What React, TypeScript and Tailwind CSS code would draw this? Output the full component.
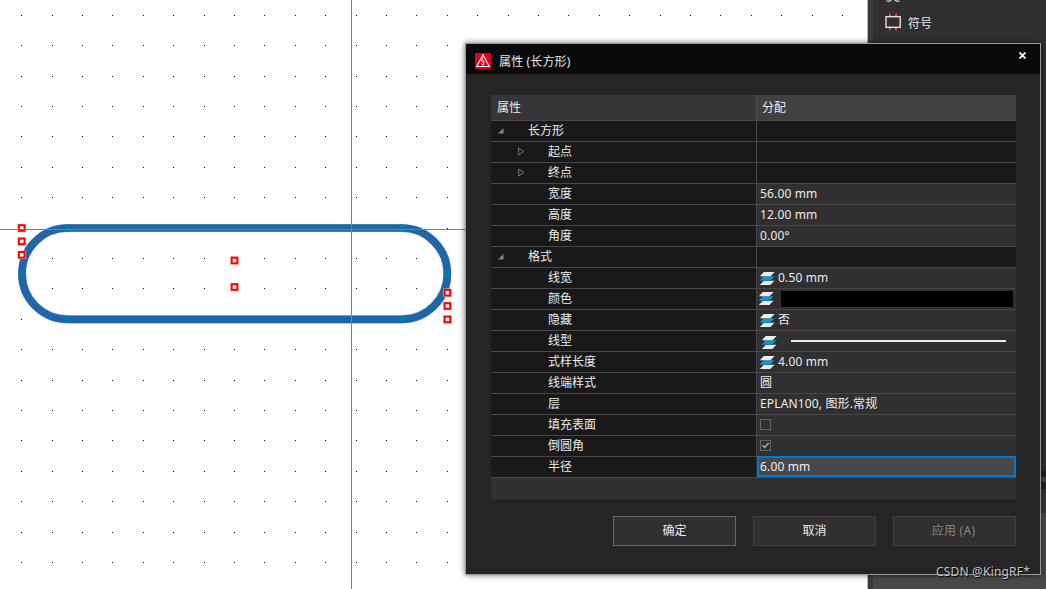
import type { ReactNode } from "react"
import clsx from "clsx"

type Row = {
    label: string
    level: 0 | 1 | 2
    toggle?: "open" | "closed"
    value?: ReactNode
    selected?: boolean
}

function LayersIcon({ className }: { className?: string }) {
    return (
        <svg className={clsx("shrink-0", className)} width="16" height="14" viewBox="0 0 16 14">
            <path d="M5 8.8H15.5L11.3 13H0.8Z" fill="#ececec" />
            <path d="M4.5 4.2H15.8L11.3 9H0.3Z" fill="#303030" />
            <path d="M4.5 4.2H15.5L11.3 8.8H0.6Z" fill="#0b93dc" />
            <path d="M4.8 0H15.7L11.5 4.2H0.8Z" fill="#ececec" />
        </svg>
    )
}

function Checkbox({ checked }: { checked?: boolean }) {
    return (
        <span className="mb-px ml-[3px] flex size-[11px] border border-[#666666]">
            {checked && (
                <svg width="9" height="9" viewBox="0 0 9 9" fill="none">
                    <path d="M1.5 4.3L3.6 6.5L7.7 2" stroke="#aaaaaa" strokeWidth="1.5" />
                </svg>
            )}
        </span>
    )
}

function Text({ children }: { children: ReactNode }) {
    return <span className="ml-[3px] tracking-[0.15px]">{children}</span>
}

function Layered({ children }: { children: ReactNode }) {
    return (
        <>
            <LayersIcon className="ml-[2px] mt-[2px]" />
            {children}
        </>
    )
}

const rows: Row[] = [
    { label: "长方形", level: 0, toggle: "open" },
    { label: "起点", level: 1, toggle: "closed" },
    { label: "终点", level: 1, toggle: "closed" },
    { label: "宽度", level: 2, value: <Text>56.00 mm</Text> },
    { label: "高度", level: 2, value: <Text>12.00 mm</Text> },
    { label: "角度", level: 2, value: <Text>0.00°</Text> },
    { label: "格式", level: 0, toggle: "open" },
    { label: "线宽", level: 2, value: <Layered><Text>0.50 mm</Text></Layered> },
    {
        label: "颜色",
        level: 2,
        value: (
            <>
                <LayersIcon className="ml-px" />
                <span className="ml-[7px] mr-[3px] h-4 flex-1 bg-black" />
            </>
        ),
    },
    { label: "隐藏", level: 2, value: <Layered><Text>否</Text></Layered> },
    {
        label: "线型",
        level: 2,
        value: (
            <>
                <LayersIcon className="ml-1 mt-1" />
                <span className="ml-[14px] mr-[10px] h-[2px] flex-1 bg-[#ececec]" />
            </>
        ),
    },
    { label: "式样长度", level: 2, value: <Layered><Text>4.00 mm</Text></Layered> },
    { label: "线端样式", level: 2, value: <Text>圆</Text> },
    { label: "层", level: 2, value: <Text>EPLAN100, 图形.常规</Text> },
    { label: "填充表面", level: 2, value: <Checkbox /> },
    { label: "倒圆角", level: 2, value: <Checkbox checked /> },
    { label: "半径", level: 2, value: <span className="ml-px tracking-[0.15px]">6.00 mm</span>, selected: true },
]

const handles = [
    [21.7, 228], [21.7, 241.4], [21.7, 254.8],
    [234.5, 260.5], [234.5, 287],
    [447.4, 292.7], [447.4, 306], [447.4, 319.4],
]

const nodes = [
    [67.5, 228], [402, 228], [67.5, 319.3],
    [402, 319.3], [22, 273.6], [447.3, 273.6],
]

function Canvas() {
    const dots: ReactNode[] = []
    for (let r = 0; r < 19; r++) {
        for (let c = 0; c < 28; c++) {
            const x = Math.floor(21.7 + c * 30.4)
            const y = Math.floor(15.3 + r * 30.4)
            dots.push(<rect key={`${r}-${c}`} x={x} y={y} width="1" height="1" fill="#000" />)
        }
    }
    return (
        <svg className="block shrink-0" width="867" height="589" viewBox="0 0 867 589">
            {dots}
            <rect x="22" y="228" width="425.3" height="91.3" rx="45.6" fill="none" stroke="#7b8fc8" strokeWidth="8.2" />
            <rect x="22" y="228" width="425.3" height="91.3" rx="45.6" fill="none" stroke="#1e66a5" strokeWidth="7.2" />
            {nodes.map(([x, y]) => (
                <circle key={`${x}-${y}`} cx={x} cy={y} r="3.6" fill="#0878a8" />
            ))}
            {handles.map(([x, y]) => (
                <g key={`${x}-${y}`}>
                    <rect x={x - 4.2} y={y - 4.2} width="8.4" height="8.4" fill="#ffb8b8" />
                    <rect x={x - 2.8} y={y - 2.8} width="5.6" height="5.6" fill="#fff" stroke="#ff0000" strokeWidth="2" />
                </g>
            ))}
            <rect x="0" y="229" width="867" height="1" fill="#808080" />
            <rect x="351" y="0" width="1" height="589" fill="#808080" />
        </svg>
    )
}

function Sidebar() {
    return (
        <div className="flex flex-1 border-l border-[#b5b5b5] bg-[#303030]">
            <div className="w-[5px] bg-[#3b3b3b]" />
            <div className="flex flex-1 flex-col">
                <div className="h-[470px] pl-3">
                    <svg className="ml-[1px] block" width="14" height="2" viewBox="0 0 14 2">
                        <path d="M0.5 1.2H3.5L5.5 -0.5M13.5 1.2H10.5L8.5 -0.5" stroke="#d8d8d8" strokeWidth="1.3" fill="none" />
                    </svg>
                    <div className="mt-[10px] flex h-[21px] items-center gap-[7px] leading-[21px] text-[#e8e8e8]">
                        <svg width="16" height="21" viewBox="0 0 16 21" fill="none">
                            <path d="M5 2V4.5M11 2V4.5M5 16V18M11 16V18" stroke="#8a8a8a" strokeWidth="2" />
                            <path d="M5 0V2.5M11 0V2.5M5 17.5V20M11 17.5V20" stroke="#a80f1e" strokeWidth="2" />
                            <rect x="1" y="4.7" width="14.2" height="10.6" stroke="#e3e3e3" strokeWidth="1.4" />
                        </svg>
                        <span className="mt-px">符号</span>
                    </div>
                </div>
                <div className="h-[7px] bg-[#202020]" />
                <div className="h-[5px] bg-[#454545]" />
                <div className="h-[7px] bg-[#202020]" />
                <div className="h-6 bg-[#353535]" />
                <div className="flex-1 bg-[#494949]" />
            </div>
        </div>
    )
}

function PropertyRow({ row }: { row: Row }) {
    return (
        <div className="flex h-[21px] border-b border-[#484848] text-[#ececec]">
            <div
                className={clsx(
                    "relative w-[265px] bg-[#191919] leading-5",
                    row.level === 0 ? "pl-[37px]" : "pl-[57px]"
                )}
            >
                {row.toggle === "open" && (
                    <svg className="absolute left-[7px] top-[7px]" width="6" height="6" viewBox="0 0 6 6">
                        <path d="M5.5 0V5.5H0Z" fill="#858585" />
                    </svg>
                )}
                {row.toggle === "closed" && (
                    <svg className="absolute left-[27px] top-[5px]" width="7" height="9" viewBox="0 0 7 9">
                        <path d="M0.7 1V8L5.8 4.5Z" fill="none" stroke="#777777" />
                    </svg>
                )}
                {row.label}
            </div>
            <div
                className={clsx(
                    "flex flex-1 items-center leading-5",
                    row.selected
                        ? "-mt-px ml-px border-2 border-[#0078d7] bg-[#484848]"
                        : "border-l border-[#484848]",
                    !row.selected && (row.value ? "bg-[#303030]" : "bg-[#191919]")
                )}
            >
                {row.value}
            </div>
        </div>
    )
}

function PropertiesDialog() {
    const button = "h-[30px] w-[123px] border bg-[#303030] text-center leading-7"
    return (
        <div className="absolute left-[465px] top-[43px] flex h-[532px] w-[576px] flex-col border border-[#999999] bg-[#252525] shadow-[0_0_6px_rgba(0,0,0,0.6)]">
            <div className="flex h-[30px] shrink-0 items-center bg-[#0a0a0a] pl-[9px] text-[#e8e8e8]">
                <svg className="mt-[3px]" width="16" height="16" viewBox="0 0 16 16" fill="none">
                    <rect width="16" height="16" rx="1" fill="#e2001a" />
                    <path d="M8 1.8L14.3 13.5H1.7Z" stroke="#fff" strokeWidth="1.1" />
                    <path d="M8 4.5L6.6 8H9.2L8 12M6.5 10.3L8 12.3L9.2 10.5" stroke="#fff" strokeWidth="0.9" />
                </svg>
                <span className="ml-2 mt-[5px] tracking-[0.15px]">属性 (长方形)</span>
                <svg className="mb-2 ml-auto mr-[14px]" width="7" height="7" viewBox="0 0 7 7">
                    <path d="M0.5 0.5L6.5 6.5M6.5 0.5L0.5 6.5" stroke="#fff" strokeWidth="1.7" />
                </svg>
            </div>

            <div className="ml-[25px] mt-[21px] h-[404px] w-[525px] bg-[#303030]">
                <div className="flex h-[26px] border-b border-[#484848] bg-[#363636] leading-[25px] text-[#ececec]">
                    <div className="w-[265px] pl-[6px]">属性</div>
                    <div className="flex-1 border-l border-[#505050] bg-[#404040] pl-[5px]">分配</div>
                </div>
                {rows.map((row) => (
                    <PropertyRow key={row.label} row={row} />
                ))}
            </div>

            <div className="ml-[147px] mt-[17px] flex gap-[17px] text-[#ececec]">
                <button className={clsx(button, "border-[#686868]")}>确定</button>
                <button className={clsx(button, "border-[#404040]")}>取消</button>
                <button className={clsx(button, "border-[#404040] pr-[2px] tracking-[0.25px] text-[#858585]")}>应用 (A)</button>
            </div>
        </div>
    )
}

export default function App() {
    return (
        <div className="relative flex h-[589px] w-[1046px] overflow-hidden bg-white font-['Noto_Sans','Noto_Sans_CJK_SC',sans-serif] text-[12px]">
            <Canvas />
            <Sidebar />
            <PropertiesDialog />
            <div className="absolute left-[936px] top-[563px] whitespace-nowrap text-[12px] leading-[18px] tracking-[0.18px] text-[#c4c4c4] [text-shadow:1px_1px_1px_#000]">
                CSDN @KingRF*
            </div>
        </div>
    )
}
